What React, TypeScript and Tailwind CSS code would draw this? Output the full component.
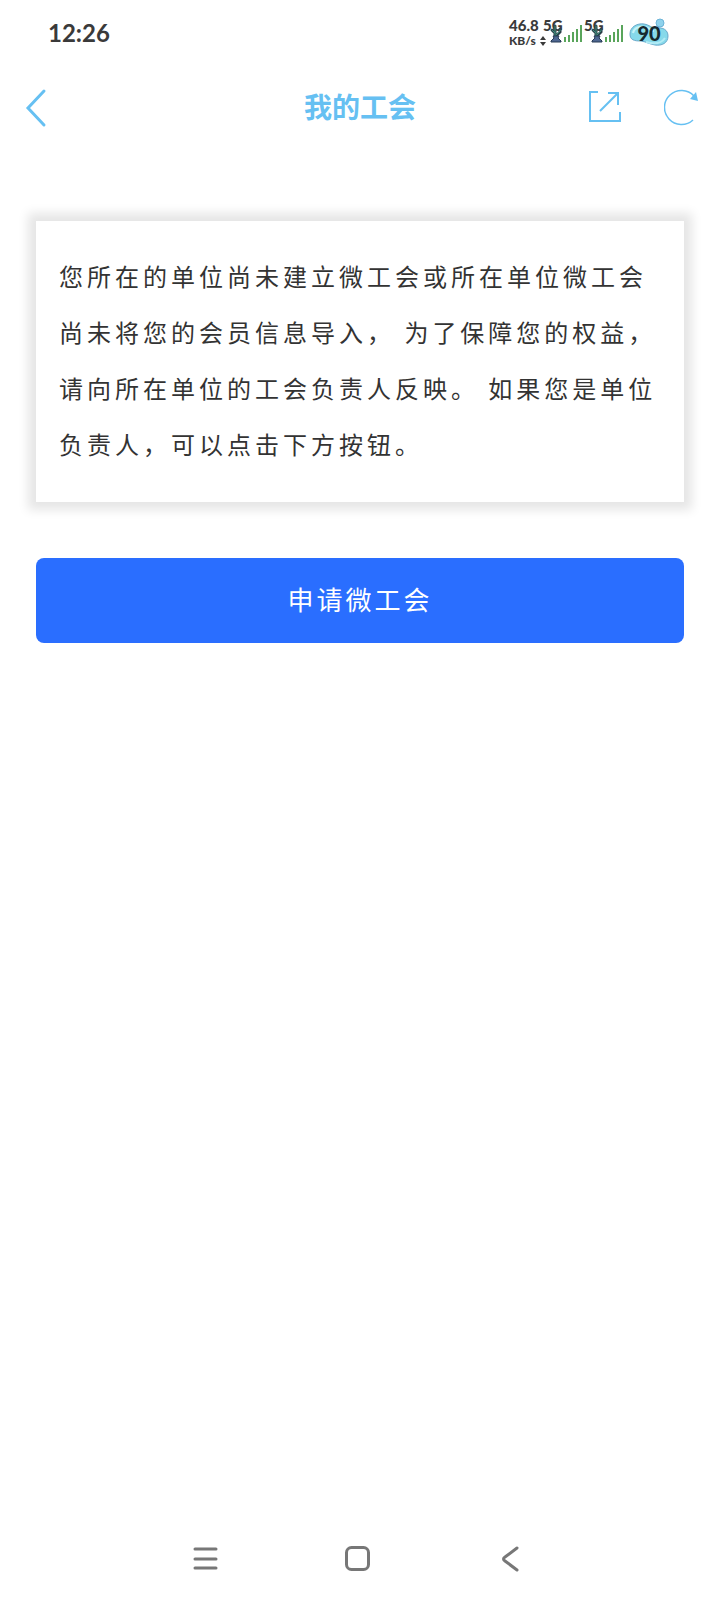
import type { ReactNode } from "react";

const NOTICE =
  "您所在的单位尚未建立微工会或所在单位微工会尚未将您的会员信息导入， 为了保障您的权益，请向所在单位的工会负责人反映。 如果您是单位负责人，可以点击下方按钮。";

function SignalIcon() {
  return (
    <div className="relative h-8 w-[41px]">
      <span className="block text-[15px] leading-4 font-black">5G</span>
      <svg viewBox="0 0 41 32" className="absolute inset-0 h-8 w-[41px]" aria-hidden="true">
        <g fill="none" strokeLinecap="round">
          <path d="M12 20V9M12 16l-3-3M13 19l4-4v-3" stroke="#2c4149" strokeWidth="3" />
          <path d="M12 19V9M12 16l-3-3M13 18l4-4v-1" stroke="#3f8f7c" strokeWidth="1" />
        </g>
        <path d="M10 19h6l-1 2 3 3v1H8v-1l3-3z" fill="#4f6791" stroke="#273a55" strokeWidth="1" />
        <g fill="#59a55b">
          <rect x="21" y="20" width="2" height="5" />
          <rect x="25" y="18" width="2" height="7" />
          <rect x="29" y="15" width="2" height="10" />
          <rect x="33" y="12" width="2" height="13" />
          <rect x="37" y="8" width="2" height="17" />
        </g>
      </svg>
    </div>
  );
}

function BatteryBadge() {
  return (
    <div className="relative flex h-8 w-10 items-center justify-center">
      <svg viewBox="0 0 40 32" className="absolute inset-0 h-8 w-10" aria-hidden="true">
        <path
          d="M1 17C1 10 8 6 15 7c6 1 7 4 12 4 7-1 12 2 12 8 0 7-6 10-13 9-6-1-8-3-14-4C5 24 1 23 1 17z"
          fill="#86d9ea"
          stroke="#6aa9cb"
          strokeWidth="1"
        />
        <path d="M4 16c1-5 6-7 11-6 5 0 6 3 10 4" fill="none" stroke="#c4f2f8" strokeWidth="2" />
        <path d="M17 25c7 2 15 2 19-4" fill="none" stroke="#b2ebf5" strokeWidth="2" />
        <circle cx="31" cy="6" r="4" fill="#8fd2ec" stroke="#6db4d8" strokeWidth="1" />
      </svg>
      <span className="relative text-xl leading-8 font-black text-[#16292f]">90</span>
    </div>
  );
}

function StatusBar() {
  return (
    <div className="flex h-[66px] items-center justify-between pr-[51px] pl-12 font-['Lato',sans-serif] text-[#3a3a3a]">
      <span className="text-2xl leading-8 font-bold">12:26</span>
      <div className="flex items-center gap-1">
        <div className="flex">
          <div className="w-[34px] text-[15px] leading-4 font-black">
            <div>46.8</div>
            <div className="flex items-center gap-1 text-xs leading-4">
              KB/s
              <svg viewBox="0 0 6 10" className="h-[10px] w-[6px] shrink-0" fill="currentColor" aria-hidden="true">
                <path d="M3 0l3 4H0zM3 10L0 6h6z" />
              </svg>
            </div>
          </div>
          <SignalIcon />
          <SignalIcon />
        </div>
        <BatteryBadge />
      </div>
    </div>
  );
}

function IconButton({ label, children }: { label: string; children: ReactNode }) {
  return (
    <button type="button" aria-label={label} className="flex h-10 w-10 items-center justify-center">
      {children}
    </button>
  );
}

function Header() {
  return (
    <header className="grid h-[83px] grid-cols-[1fr_auto_1fr] items-center px-4 text-[#66c0f2]">
      <IconButton label="返回">
        <svg viewBox="0 0 40 40" className="h-10 w-10" fill="none" stroke="currentColor" strokeWidth="3">
          <path d="M28 3L12 20l16 17" strokeLinecap="round" />
        </svg>
      </IconButton>
      <h1 className="pb-1 text-[28px] leading-10 font-bold">我的工会</h1>
      <div className="flex justify-end gap-9">
        <IconButton label="分享">
          <svg viewBox="0 0 40 40" className="h-10 w-10" fill="none" stroke="currentColor" strokeWidth="2">
            <path d="M10 4H2v29h30v-9M20 5h10v12M30 5L12 23" />
          </svg>
        </IconButton>
        <IconButton label="刷新">
          <svg viewBox="0 0 40 40" className="h-10 w-10" fill="none" stroke="currentColor" strokeWidth="1.5">
            <path d="M29 32A17 17 0 1 1 30 8" />
            <path d="M32 4l2 9-8-2z" fill="currentColor" stroke="none" />
          </svg>
        </IconButton>
      </div>
    </header>
  );
}

function SystemNav() {
  return (
    <nav className="flex h-[82px] items-center justify-center gap-28 text-[#777777]">
      <IconButton label="菜单">
        <svg viewBox="0 0 40 40" className="h-10 w-10" stroke="currentColor" strokeWidth="3" strokeLinecap="round">
          <path d="M7 10h21M7 20h21M7 29h21" />
        </svg>
      </IconButton>
      <IconButton label="主页">
        <svg viewBox="0 0 40 40" className="h-10 w-10" fill="none" stroke="currentColor" strokeWidth="3">
          <rect x="6.5" y="8.5" width="22" height="22" rx="5" />
        </svg>
      </IconButton>
      <IconButton label="后退">
        <svg
          viewBox="0 0 40 40"
          className="h-10 w-10"
          fill="none"
          stroke="currentColor"
          strokeWidth="3"
          strokeLinecap="round"
        >
          <path d="M25 9L13 18q-3 2 0 4l12 9" />
        </svg>
      </IconButton>
    </nav>
  );
}

export default function App() {
  return (
    <div
      lang="zh-CN"
      className="flex min-h-screen flex-col bg-white font-['Noto_Sans_CJK_SC',sans-serif]"
    >
      <StatusBar />
      <Header />
      <main className="flex flex-1 flex-col gap-14 px-9 pt-[72px]">
        <p className="bg-white px-[23px] pt-[27px] pb-[30px] text-2xl leading-[56px] tracking-[4px] text-[#333333] shadow-[0_0_10px_8px_#e6e6e6]">
          {NOTICE}
        </p>
        <button
          type="button"
          className="h-[85px] rounded-lg bg-[#2a6eff] pb-1 text-[26px] tracking-[3px] text-white"
        >
          申请微工会
        </button>
      </main>
      <SystemNav />
    </div>
  );
}
